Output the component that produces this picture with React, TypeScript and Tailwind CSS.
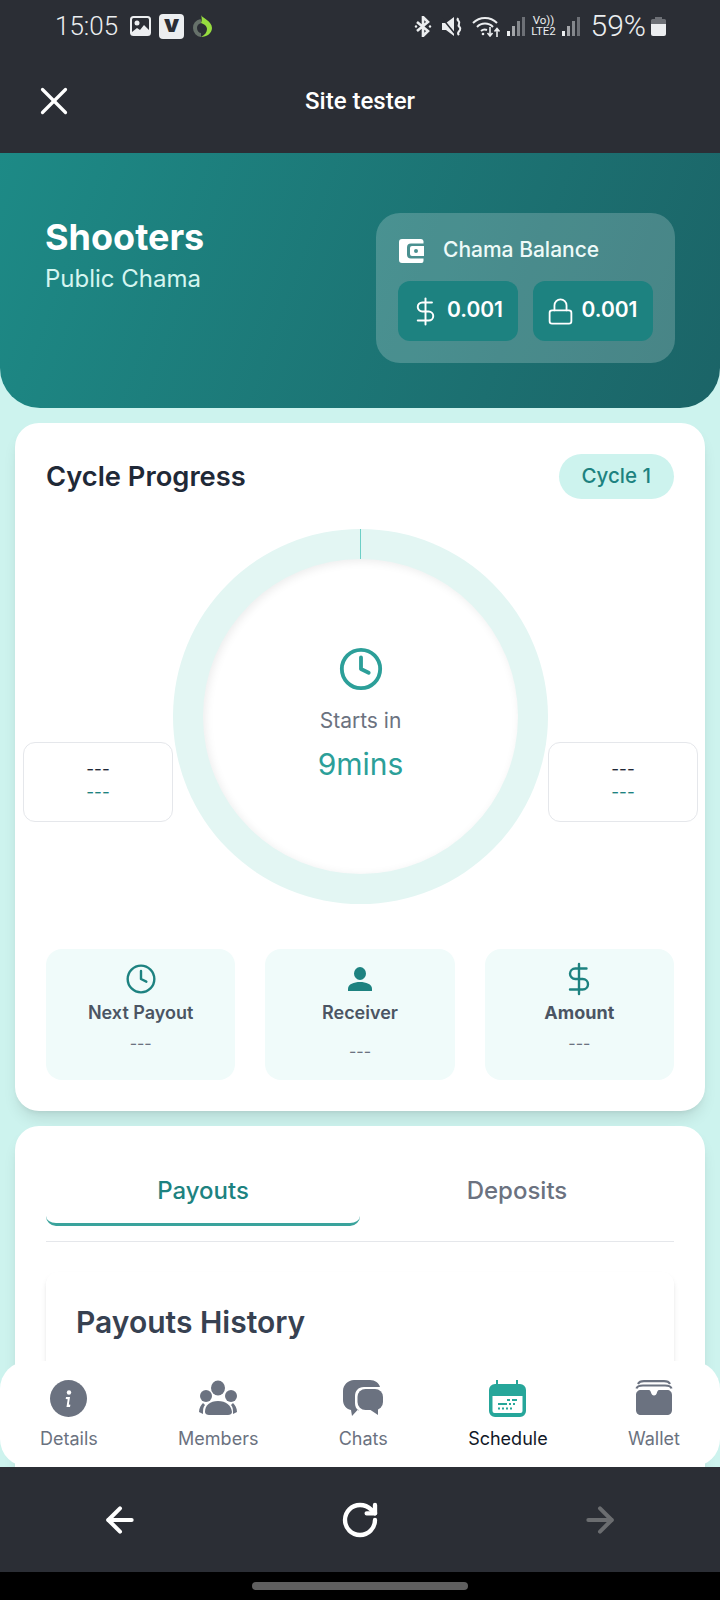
import type { ReactNode } from 'react';
import { Clock, DollarSign, Lock, X, ArrowLeft, ArrowRight, RotateCw } from 'lucide-react';

const font = { fontFamily: 'Inter, sans-serif' };
const roboto = { fontFamily: 'Roboto, sans-serif' };

function WalletIcon() {
  return (
    <svg width="25" height="24" viewBox="0 0 25 24" fill="white">
      <path d="M3 0h19a3 3 0 0 1 2.500 2v2.500H12a4 4 0 0 0-4 4v7a4 4 0 0 0 4 4h12.500V22a2 2 0 0 1-2 2H3a3 3 0 0 1-3-3V3a3 3 0 0 1 3-3z" />
      <path fillRule="evenodd" d="M13 7h12v10H13a2 2 0 0 1-2-2V9a2 2 0 0 1 2-2zm4 3a2 2 0 1 0 0 4 2 2 0 0 0 0-4z" />
    </svg>
  );
}

function SignalBars() {
  return (
    <div className="flex items-end gap-[2px] h-[19px] w-[19px]">
      <div className="w-[3px] h-[5px] bg-[#eceef0]" />
      <div className="w-[3px] h-[10px] bg-[#a4a6aa]" />
      <div className="w-[3px] h-[15px] bg-[#85888d]" />
      <div className="w-[3px] h-[19px] bg-[#6d7076]" />
    </div>
  );
}

function StatusBar() {
  return (
    <div className="h-[60px] shrink-0 flex items-center justify-between pl-[55px] pr-[54px] pb-[8px] text-[#eceef0]">
      <div className="flex items-center">
        <span className="text-[26px] font-light" style={roboto}>15:05</span>
        <svg className="ml-[12px]" width="21" height="20" viewBox="0 0 21 20">
          <rect width="21" height="20" rx="3.500" fill="#eceef0" />
          <rect x="2" y="2" width="17" height="16" rx="1.500" fill="#2b2e35" />
          <circle cx="7" cy="7" r="2.500" fill="#eceef0" />
          <path d="M2 16l5-4 3 2 4-5 5 5v4H2z" fill="#eceef0" />
        </svg>
        <div className="ml-[8px] w-[25px] h-[25px] rounded-[4px] bg-[#eceef0] flex items-center justify-center text-[#2b2e35] text-[24px] font-black leading-none pb-[4px]">v</div>
        <svg className="ml-[9px]" width="20" height="22" viewBox="0 0 20 22" fill="none">
          <path d="M8 6C4 7 2 10 2 13c0 4 3 7 6 7" stroke="#66716a" strokeWidth="4" />
          <path d="M8 0c1 3 11 6 11 13 0 5-5 9-11 9 4-2 6-5 6-8 0-3-3-5-6-6 1-2 1-5 0-8z" fill="#97dd3f" />
        </svg>
      </div>
      <div className="flex items-center">
        <svg width="18" height="21" viewBox="0 0 18 21" fill="none" stroke="#eceef0" strokeWidth="2.600">
          <path d="M3 6l11 9-5 5V1l5 5-11 9" />
          <circle cx="2" cy="10.500" r="1.200" fill="#eceef0" stroke="none" />
          <circle cx="16" cy="10.500" r="1.200" fill="#eceef0" stroke="none" />
        </svg>
        <svg className="ml-[10px]" width="21" height="19" viewBox="0 0 21 19" fill="none">
          <path d="M0 6h4l8-6v19l-8-6H0z" fill="#eceef0" />
          <path d="M0 1l14 17" stroke="#2b2e35" strokeWidth="1.500" />
          <path d="M16 1c-2 3 3 3 1 6s3 3 1 6-3 3-1 5" stroke="#eceef0" strokeWidth="2.200" />
        </svg>
        <svg className="ml-[9px]" width="29" height="22" viewBox="0 0 29 22" fill="none" stroke="#eceef0" strokeWidth="2">
          <path d="M1 8a17 17 0 0 1 24 0M5 12a11 11 0 0 1 16 0M9 16a6 6 0 0 1 6-1" />
          <circle cx="11" cy="19" r="1.300" fill="#eceef0" stroke="none" />
          <path d="M18 12v9M15.500 18l2.500 3 2.500-3M25 22v-8M22.500 16.500l2.500-3 2.500 3" strokeWidth="1.600" />
        </svg>
        <div className="ml-[6px]"><SignalBars /></div>
        <div className="ml-[5px] w-[26px] flex flex-col items-center text-[11.500px] leading-[11px]" style={roboto}>
          <span>Vo))</span>
          <span>LTE2</span>
        </div>
        <div className="ml-[5px]"><SignalBars /></div>
        <span className="ml-[10px] text-[30px] font-light leading-none" style={roboto}>59%</span>
        <svg className="ml-[5px]" width="15" height="19" viewBox="0 0 15 19">
          <path d="M4 0h7v2h2.500a1.500 1.500 0 0 1 1.500 1.500V7H0V3.500A1.500 1.500 0 0 1 1.500 2H4z" fill="#6d7076" />
          <path d="M0 7h15v10a2 2 0 0 1-2 2H2a2 2 0 0 1-2-2z" fill="#eceef0" />
        </svg>
      </div>
    </div>
  );
}

function SideBox() {
  return (
    <div className="mt-[213px] w-[150px] h-[80px] shrink-0 rounded-[12px] border border-[#e5e7eb] bg-white flex flex-col items-center justify-center pb-[3px] text-[17px] leading-[23px]">
      <span className="text-[#1f2937]">---</span>
      <span className="text-[#1d8280]">---</span>
    </div>
  );
}

function StatTile({ icon, label, bold, lower }: { icon: ReactNode; label: string; bold?: boolean; lower?: boolean }) {
  return (
    <div className="h-[131px] rounded-[16px] bg-[#f0fbfa] flex flex-col items-center pt-[14px]">
      <div className="h-[32px] flex items-center justify-center text-[#1d8280]">{icon}</div>
      <span className={`mt-[6px] text-[18px] leading-[24px] ${bold ? 'font-bold text-[#4b5563]' : 'font-semibold text-[#4b5563]'}`}>{label}</span>
      <span className={`text-[16px] leading-[24px] text-[#6b7280] ${lower ? 'mt-[14px]' : 'mt-[6px]'}`}>---</span>
    </div>
  );
}

function NavItem({ icon, label, active }: { icon: ReactNode; label: string; active?: boolean }) {
  return (
    <div className="flex flex-col items-center">
      <div className="h-[38px] flex items-center justify-center">{icon}</div>
      <span className={`mt-[10px] text-[18px] leading-[24px] ${active ? 'text-[#111827]' : 'text-[#6b7280]'}`}>{label}</span>
    </div>
  );
}

function DetailsIcon() {
  return (
    <svg width="37" height="37" viewBox="0 0 37 37">
      <circle cx="18.500" cy="18.500" r="18.500" fill="#6b7280" />
      <circle cx="19" cy="12.500" r="2.200" fill="white" />
      <path d="M16 17h4l-1.200 7.500 1.600.2-.4 2.300h-3.500l1.200-7.700-2-.2z" fill="white" />
    </svg>
  );
}

function MembersIcon() {
  return (
    <svg width="40" height="38" viewBox="0 0 40 38" fill="#6b7280">
      <ellipse cx="20" cy="9" rx="7" ry="7.500" />
      <ellipse cx="8" cy="17" rx="6" ry="6" />
      <ellipse cx="33" cy="17" rx="6" ry="6" />
      <path d="M7 33c0-7 5-11 13-11s13 4 14 11c0 2-2 3-4 3H11c-2 0-4-1-4-3z" />
      <path d="M5 24c-2 2-4 5-4 9l4 2c0-4 0-7 2-9z" />
      <path d="M35 24c2 2 4 5 4 9l-4 2c0-4 0-7-2-9z" />
    </svg>
  );
}

function ChatsIcon() {
  return (
    <svg width="40" height="37" viewBox="0 0 40 37" fill="#6b7280">
      <path d="M11 0H27C32 0 36 3 37 7H21C15 7 12 11 12 16V23C12 26 13 29 16 31L15 29.500 9 36 8 30C3 29 0 25 0 20V11C0 5 5 0 11 0Z" />
      <rect x="14.500" y="9" width="25.500" height="21" rx="8" />
      <path d="M26 29l9 6v-7z" />
    </svg>
  );
}

function ScheduleIcon() {
  return (
    <svg width="37" height="37" viewBox="0 0 37 37">
      <path d="M7 0h2v4h18V0h2v4h2a6 6 0 0 1 6 6v21a6 6 0 0 1-6 6H6a6 6 0 0 1-6-6V10a6 6 0 0 1 6-6h1z" fill="#26a69a" />
      <path d="M3.500 16h30v15a2 2 0 0 1-2 2h-26a2 2 0 0 1-2-2z" fill="white" />
      <path d="M18 19h3v2h-3zM23 19h5v2h-5zM9 23h9v2H9zM20 23h2v2h-2zM24 23h2v2h-2zM9 27.500h2v2H9zM13 27.500h2v2h-2zM17 27.500h2v2h-2zM21 27.500h2v2h-2z" fill="#26a69a" />
    </svg>
  );
}

function NavWalletIcon() {
  return (
    <svg width="38" height="36" viewBox="0 0 38 36" fill="none">
      <path d="M3 4C4 2 6 1.200 9 1.200h20c3 0 5 .8 6 2.800M1.500 8.500C2 6.500 5 5.500 8 5.500h22c3 0 6 1 6.500 3" stroke="#6b7280" strokeWidth="2.200" />
      <path d="M6 10H14C15 10 15.500 11 16 12.500C16.500 14.500 17.500 15.500 19 15.500C20.500 15.500 21.500 14.500 22 12.500C22.500 11 23 10 24 10H32C35 10 37 12 37 15V30C37 33 35 35 32 35H6C3 35 1 33 1 30V15C1 12 3 10 6 10Z" fill="#6b7280" />
    </svg>
  );
}

export default function App() {
  return (
    <div className="w-[720px] h-[1600px] overflow-hidden flex flex-col bg-[#2b2e35]" style={font}>
      <StatusBar />
      <div className="h-[93px] flex items-center relative shrink-0 pb-[11px]">
        <X className="ml-[31px] text-white" size={46} strokeWidth={1.7} />
        <span className="absolute left-0 right-0 text-center text-white text-[24px] font-medium" style={roboto}>Site tester</span>
      </div>

      <div className="relative h-[1314px] shrink-0 bg-[#cdf3ee] overflow-hidden">
        {/* Hero */}
        <div className="h-[255px] rounded-b-[40px] bg-linear-110 from-[#1d8a86] to-[#1b6467] pl-[45px] pr-[45px] pt-[60px] flex justify-between">
          <div className="pt-[3px]">
            <h1 className="text-[36px] leading-[42px] font-bold text-white">Shooters</h1>
            <p className="mt-[6px] text-[24px] leading-[30px] text-[#d5f5f0]">Public Chama</p>
          </div>
          <div className="w-[299px] h-[150px] rounded-[24px] bg-white/20 px-[22px] pt-[24px]">
            <div className="flex items-center h-[28px] pl-[1px]">
              <WalletIcon />
              <span className="ml-[19px] text-[21px] font-medium text-[#eefaf8] pb-[2px]">Chama Balance</span>
            </div>
            <div className="mt-[16px] grid grid-cols-2 gap-[15px]">
              <div className="h-[60px] rounded-[12px] bg-[#1d8280] flex items-center justify-center pr-[3px] text-white">
                <DollarSign size={31} strokeWidth={1.5} />
                <span className="ml-[6px] text-[21px] font-semibold pb-[2px]">0.001</span>
              </div>
              <div className="h-[60px] rounded-[12px] bg-[#1d8280] flex items-center justify-center pr-[3px] text-white">
                <Lock size={29} strokeWidth={1.5} />
                <span className="ml-[7px] text-[21px] font-semibold pb-[2px]">0.001</span>
              </div>
            </div>
          </div>
        </div>

        {/* Cycle progress */}
        <div className="mx-[15px] mt-[15px] h-[688px] rounded-[24px] bg-white shadow-lg">
          <div className="flex items-center justify-between px-[31px] pt-[31px]">
            <h2 className="text-[27.300px] leading-[32px] font-semibold text-[#1f2937]">Cycle Progress</h2>
            <span className="h-[45px] px-[23px] rounded-full bg-[#cdf3ee] flex items-center text-[20.500px] font-medium text-[#1d8280]">Cycle 1</span>
          </div>
          <div className="mt-[30px] px-[8px] flex justify-between">
            <SideBox />
            <div className="relative w-[375px] h-[375px] shrink-0 rounded-full bg-[#e3f6f3] flex items-center justify-center">
              <div className="absolute top-0 left-[187px] w-[1px] h-[30px] bg-[#6ccfc6]" />
              <div className="w-[315px] h-[315px] rounded-full bg-white shadow-[inset_2px_2px_10px_rgba(0,0,0,0.08)] flex flex-col items-center pt-[87px]">
                <Clock className="text-[#2c9f99]" size={46} strokeWidth={2} />
                <span className="mt-[15px] text-[21px] leading-[28px] text-[#6b7280]">Starts in</span>
                <span className="mt-[11px] text-[30px] leading-[36px] text-[#2c9f99]">9mins</span>
              </div>
            </div>
            <SideBox />
          </div>
          <div className="mt-[45px] px-[31px] grid grid-cols-3 gap-[30px]">
            <StatTile icon={<Clock size={32} strokeWidth={1.8} />} label="Next Payout" />
            <StatTile
              icon={
                <svg width="26" height="24" viewBox="0 0 26 24" fill="#1d8280">
                  <ellipse cx="13" cy="6.500" rx="6" ry="6.500" />
                  <path d="M1 24v-2c0-5 6-7 12-7s12 2 12 7v2z" />
                </svg>
              }
              label="Receiver"
              lower
            />
            <StatTile icon={<DollarSign size={36} strokeWidth={1.6} />} label="Amount" bold />
          </div>
        </div>

        {/* Tabs */}
        <div className="mx-[15px] mt-[15px] rounded-[24px] bg-white shadow-lg h-[400px] px-[31px] pt-[49px]">
          <div className="flex border-b border-[#e5e7eb] h-[67px]">
            <div className="flex-1 relative text-center text-[24px] leading-[32px] font-medium text-[#1d8280]">
              Payouts
              <div className="absolute left-0 right-0 top-[40px] h-[11px] rounded-b-[10px] border-b-[3px] border-[#3aa39c]" />
            </div>
            <div className="flex-1 text-center text-[24px] leading-[32px] font-medium text-[#6b7280]">Deposits</div>
          </div>
          <div className="mt-[30px] rounded-[12px] bg-white shadow-md px-[30px] pt-[30px] h-[200px]">
            <h3 className="text-[30px] leading-[40px] font-semibold text-[#374151]">Payouts History</h3>
          </div>
        </div>

        {/* Bottom nav sits over the scrolling content */}
        <div className="absolute left-0 right-0 bottom-0 h-[106px] rounded-[28px] bg-white flex items-start justify-between px-[40px] pt-[18px]">
          <NavItem icon={<DetailsIcon />} label="Details" />
          <NavItem icon={<MembersIcon />} label="Members" />
          <NavItem icon={<ChatsIcon />} label="Chats" />
          <NavItem icon={<ScheduleIcon />} label="Schedule" active />
          <NavItem icon={<NavWalletIcon />} label="Wallet" />
        </div>
      </div>

      {/* Browser controls */}
      <div className="h-[105px] shrink-0 flex items-center justify-between pl-[100px] pr-[100px]">
        <ArrowLeft className="text-white" size={40} strokeWidth={2.4} />
        <RotateCw className="text-white" size={40} strokeWidth={2.6} />
        <ArrowRight className="text-[#6b6d70]" size={40} strokeWidth={2.4} />
      </div>
      <div className="flex-1 bg-black flex items-center justify-center">
        <div className="w-[216px] h-[8px] rounded-full bg-[#5f5f5f]" />
      </div>
    </div>
  );
}
